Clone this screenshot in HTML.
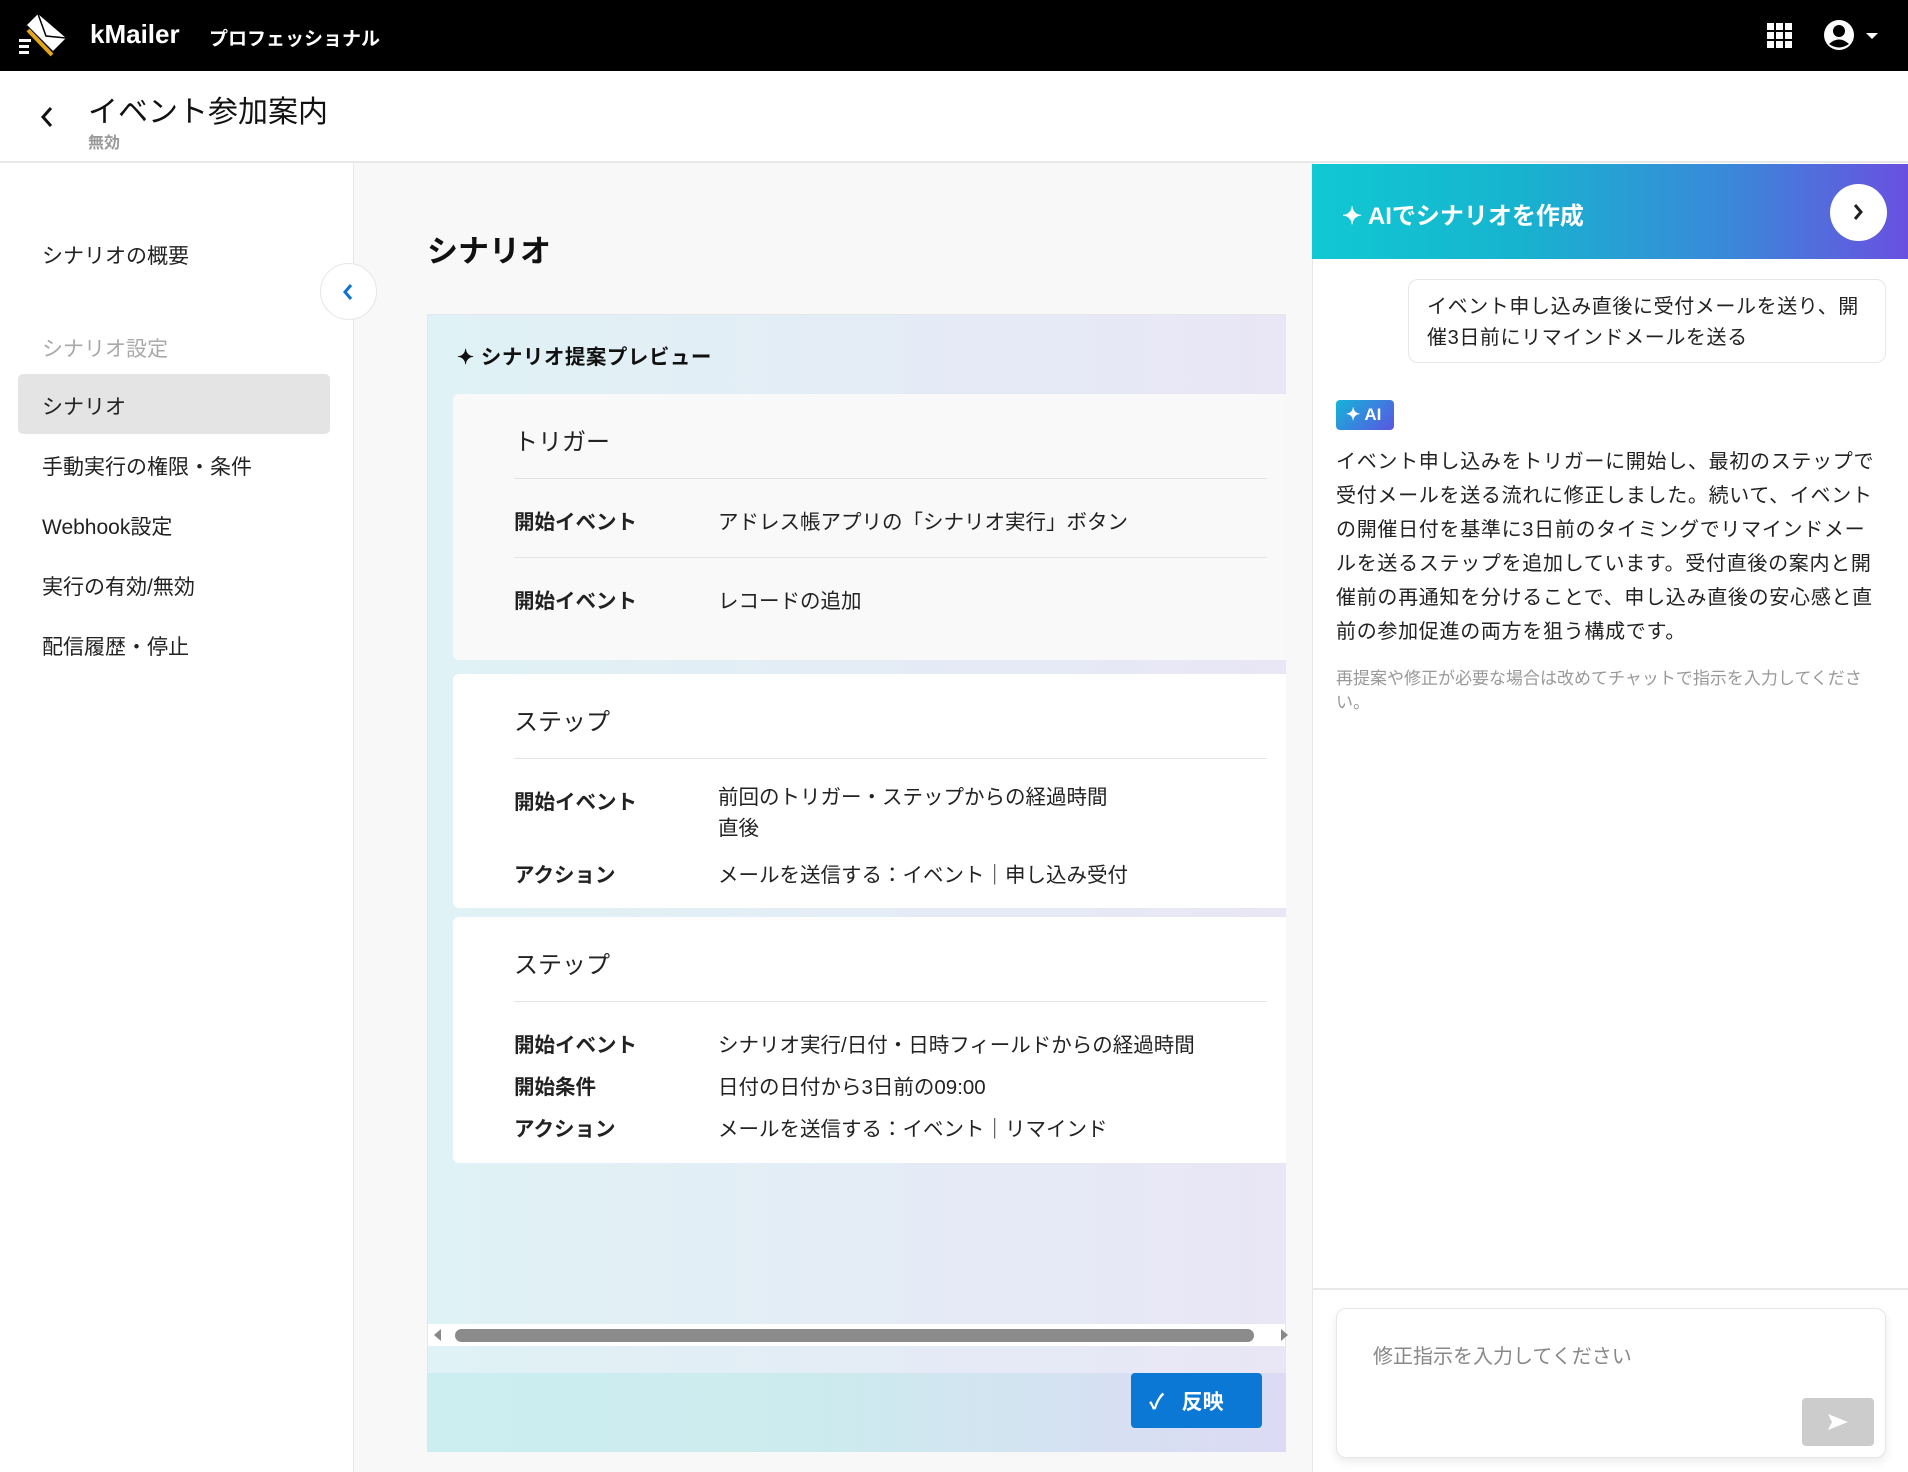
<!DOCTYPE html>
<html><head><meta charset="utf-8"><style>
*{margin:0;padding:0;box-sizing:border-box}
body{width:1908px;height:1472px;position:relative;overflow:hidden;background:#f8f8f8;font-family:"Liberation Sans","Noto Sans CJK JP",sans-serif;color:#222}
.a{position:absolute;white-space:nowrap}
.hdr{left:0;top:0;width:1908px;height:71px;background:#000}
.side{left:0;top:163px;width:354px;height:1309px;background:#fff;border-right:1px solid #e6e6e6}
.si{left:42px;font-size:21px;color:#222}
.card{position:absolute;left:453px;width:833px;background:#fff;border-radius:6px 0 0 6px}
.ct{position:absolute;left:61px;font-size:24px;color:#222}
.dv{position:absolute;left:61px;width:753px;height:1px;background:#e4e4e4}
.lb{position:absolute;left:61px;font-size:20.5px;font-weight:bold}
.vl{position:absolute;left:265px;font-size:20.5px}
</style></head><body>
<div class="a hdr"></div>
<svg class="a" style="left:16px;top:12px" width="54" height="46" viewBox="0 0 54 46">
<polygon points="22,2 50,26 36,40 10,14" fill="#fff"/>
<polyline points="22,2 30,24 50,26" stroke="#000" stroke-width="1.5" fill="none"/>
<line x1="10" y1="14" x2="36" y2="40" stroke="#000" stroke-width="3"/>
<line x1="12" y1="18" x2="36" y2="43" stroke="#e2a81a" stroke-width="4"/>
<rect x="3" y="27" width="12" height="3" fill="#fff"/><rect x="3" y="33" width="10" height="3" fill="#fff"/><rect x="3" y="39" width="10" height="3" fill="#fff"/>
</svg>
<div class="a" style="left:90px;top:19px;font-size:26px;font-weight:bold;color:#fff">kMailer</div>
<div class="a" style="left:209px;top:24px;font-size:19px;font-weight:bold;color:#fff">プロフェッショナル</div>
<svg class="a" style="left:1767px;top:23px" width="25" height="25"><g fill="#fff"><rect x="0" y="0" width="7" height="7"/><rect x="9" y="0" width="7" height="7"/><rect x="18" y="0" width="7" height="7"/><rect x="0" y="9" width="7" height="7"/><rect x="9" y="9" width="7" height="7"/><rect x="18" y="9" width="7" height="7"/><rect x="0" y="18" width="7" height="7"/><rect x="9" y="18" width="7" height="7"/><rect x="18" y="18" width="7" height="7"/></g></svg>
<svg class="a" style="left:1823px;top:19px" width="60" height="32"><circle cx="16" cy="16" r="15" fill="#fff"/><circle cx="16" cy="12" r="6" fill="#000"/><path d="M6 25 Q16 16 26 25 Q16 32 6 25Z" fill="#000"/><path d="M43 14 L55 14 L49 20Z" fill="#fff"/></svg>
<div class="a" style="left:0;top:71px;width:1908px;height:92px;background:#fff;border-bottom:2px solid #e8e8e8"></div>
<svg class="a" style="left:38px;top:105px" width="18" height="24"><path d="M13 3 L5 12 L13 21" stroke="#111" stroke-width="3" fill="none"/></svg>
<div class="a" style="left:88px;top:87px;font-size:30px;color:#111">イベント参加案内</div>
<div class="a" style="left:88px;top:129px;font-size:16px;color:#999;font-weight:bold">無効</div>
<div class="a side"></div>
<div class="a si" style="left:42px;top:240px">シナリオの概要</div>
<div class="a si" style="top:333px;color:#aaa">シナリオ設定</div>
<div class="a" style="left:18px;top:374px;width:312px;height:60px;background:#e4e4e4;border-radius:5px"></div>
<div class="a si" style="top:391px">シナリオ</div>
<div class="a si" style="top:451px">手動実行の権限・条件</div>
<div class="a si" style="top:511px">Webhook設定</div>
<div class="a si" style="top:571px">実行の有効/無効</div>
<div class="a si" style="top:631px">配信履歴・停止</div>
<div class="a" style="left:320px;top:263px;width:57px;height:57px;border-radius:50%;background:#fff;border:1px solid #e6e6e6"></div>
<svg class="a" style="left:340px;top:282px" width="16" height="20"><path d="M11 3 L5 10 L11 17" stroke="#0a73d6" stroke-width="3" fill="none"/></svg>
<div class="a" style="left:427px;top:226px;font-size:31px;font-weight:bold;color:#111">シナリオ</div>
<div class="a" style="left:427px;top:314px;width:859px;height:1138px;background:linear-gradient(90deg,#dff2f5,#e9e6f6);border:1px solid #e6e6e6"></div>
<div class="a" style="left:427px;top:1373px;width:859px;height:79px;background:linear-gradient(90deg,#cceef0,#ccebee 45%,#dcdaf4)"></div>
<div class="a" style="left:457px;top:340px;font-size:20.5px;font-weight:bold;color:#111;letter-spacing:0.5px">✦ シナリオ提案プレビュー</div>
<div class="card" style="top:394px;height:266px;background:#f9f9f9">
<div class="ct" style="top:28px">トリガー</div><div class="dv" style="top:84px"></div>
<div class="lb" style="top:111px">開始イベント</div><div class="vl" style="top:111px">アドレス帳アプリの「シナリオ実行」ボタン</div>
<div class="dv" style="top:163px"></div>
<div class="lb" style="top:190px">開始イベント</div><div class="vl" style="top:190px">レコードの追加</div></div>
<div class="card" style="top:674px;height:234px">
<div class="ct" style="top:28px">ステップ</div><div class="dv" style="top:84px"></div>
<div class="lb" style="top:111px">開始イベント</div><div class="vl" style="top:111px;line-height:31px;margin-top:-3px">前回のトリガー・ステップからの経過時間<br>直後</div>
<div class="lb" style="top:184px">アクション</div><div class="vl" style="top:184px">メールを送信する：イベント｜申し込み受付</div></div>
<div class="card" style="top:917px;height:246px">
<div class="ct" style="top:28px">ステップ</div><div class="dv" style="top:84px"></div>
<div class="lb" style="top:111px">開始イベント</div><div class="vl" style="top:111px">シナリオ実行/日付・日時フィールドからの経過時間</div>
<div class="lb" style="top:153px">開始条件</div><div class="vl" style="top:153px">日付の日付から3日前の09:00</div>
<div class="lb" style="top:195px">アクション</div><div class="vl" style="top:195px">メールを送信する：イベント｜リマインド</div></div>
<div class="a" style="left:428px;top:1324px;width:857px;height:22px;background:#fff"></div>
<div class="a" style="left:455px;top:1329px;width:799px;height:13px;background:#8b8b8b;border-radius:7px"></div>
<svg class="a" style="left:432px;top:1328px" width="860" height="14"><path d="M2 7 L9 1 L9 13Z" fill="#888"/><path d="M849 1 L856 7 L849 13Z" fill="#888"/></svg>
<div class="a" style="left:1131px;top:1373px;width:131px;height:55px;background:#0a78d4;border-radius:4px;color:#fff;font-size:21px;font-weight:bold;padding:13px 0 0 18px">✓&nbsp;&nbsp; 反映</div>
<div class="a" style="left:1312px;top:163px;width:596px;height:1309px;background:#fff;border-left:1px solid #e6e6e6"></div>
<div class="a" style="left:1312px;top:164px;width:596px;height:95px;background:linear-gradient(90deg,#10c9d2,#17b3cf 35%,#3a88d9 70%,#6a50e0)"></div>
<div class="a" style="left:1342px;top:196px;font-size:24px;font-weight:bold;color:#fff">✦ AIでシナリオを作成</div>
<div class="a" style="left:1830px;top:184px;width:57px;height:57px;border-radius:50%;background:#fff"></div>
<svg class="a" style="left:1850px;top:202px" width="16" height="20"><path d="M5 3 L11 10 L5 17" stroke="#222" stroke-width="3" fill="none"/></svg>
<div class="a" style="left:1408px;top:279px;width:478px;height:84px;border:1px solid #e6e6e6;border-radius:10px;font-size:20px;line-height:31px;padding:12px 14px 0 18px;white-space:normal;letter-spacing:0.6px">イベント申し込み直後に受付メールを送り、開催3日前にリマインドメールを送る</div>
<div class="a" style="left:1336px;top:400px;width:58px;height:30px;border-radius:4px;background:linear-gradient(135deg,#14b5d8,#5a55e2);color:#fff;font-size:17px;font-weight:bold;padding:5px 0 0 10px">✦ AI</div>
<div class="a" style="left:1336px;top:445px;width:546px;font-size:20px;line-height:34px;white-space:normal;color:#222;letter-spacing:0.7px">イベント申し込みをトリガーに開始し、最初のステップで受付メールを送る流れに修正しました。続いて、イベントの開催日付を基準に3日前のタイミングでリマインドメールを送るステップを追加しています。受付直後の案内と開催前の再通知を分けることで、申し込み直後の安心感と直前の参加促進の両方を狙う構成です。</div>
<div class="a" style="left:1336px;top:667px;width:536px;font-size:17px;line-height:24px;white-space:normal;color:#999">再提案や修正が必要な場合は改めてチャットで指示を入力してください。</div>
<div class="a" style="left:1312px;top:1288px;width:596px;height:2px;background:#e8e8e8"></div>
<div class="a" style="left:1336px;top:1308px;width:550px;height:150px;background:#fff;border:1px solid #e6e6e6;border-radius:10px;box-shadow:0 4px 10px rgba(0,0,0,.08)"></div>
<div class="a" style="left:1373px;top:1340px;font-size:20px;color:#888">修正指示を入力してください</div>
<div class="a" style="left:1802px;top:1398px;width:72px;height:48px;background:#cccccc;border-radius:4px"></div>
<svg class="a" style="left:1826px;top:1412px" width="24" height="20"><path d="M2 2 L22 10 L2 18 L6 10Z" fill="#fff"/></svg>
</body></html>
